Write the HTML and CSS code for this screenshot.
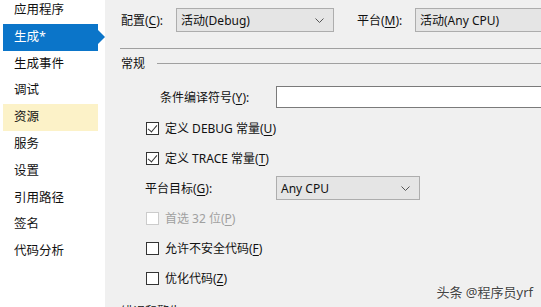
FILE: index.html
```html
<!DOCTYPE html>
<html lang="zh-CN">
<head>
    <meta charset="UTF-8">
    <title>项目属性</title>
    <link rel="stylesheet" href="styles.css">
</head>
<body>
    <div class="window">
        <nav class="nav">
            <div class="nav-item">应用程序</div>
            <div class="nav-item active">生成*</div>
            <div class="nav-item">生成事件</div>
            <div class="nav-item">调试</div>
            <div class="nav-item hover">资源</div>
            <div class="nav-item">服务</div>
            <div class="nav-item">设置</div>
            <div class="nav-item">引用路径</div>
            <div class="nav-item">签名</div>
            <div class="nav-item">代码分析</div>
        </nav>
        <main class="panel">
            <div class="top-row">
                <span class="top-label">配置(<u>C</u>):</span>
                <div class="combo combo-config">
                    <span>活动(Debug)</span>
                    <svg class="chevron" width="9" height="5" viewBox="0 0 9 5"><path d="M0.5 0.5 L4.5 4.5 L8.5 0.5" fill="none" stroke="#555" stroke-width="1"/></svg>
                </div>
                <span class="top-label platform-label">平台(<u>M</u>):</span>
                <div class="combo combo-platform">
                    <span>活动(Any CPU)</span>
                </div>
            </div>
            <div class="separator"></div>

            <div class="group-title">
                <span>常规</span>
                <div class="group-line"></div>
            </div>

            <div class="field-row">
                <span class="field-label">条件编译符号(<u>Y</u>):</span>
                <div class="textbox"></div>
            </div>

            <div class="row">
                <span class="check checked"></span>
                <span>定义 DEBUG 常量(<u>U</u>)</span>
            </div>
            <div class="row">
                <span class="check checked"></span>
                <span>定义 TRACE 常量(<u>T</u>)</span>
            </div>
            <div class="row">
                <span class="target-label">平台目标(<u>G</u>):</span>
                <div class="combo combo-target">
                    <span>Any CPU</span>
                    <svg class="chevron" width="9" height="5" viewBox="0 0 9 5"><path d="M0.5 0.5 L4.5 4.5 L8.5 0.5" fill="none" stroke="#555" stroke-width="1"/></svg>
                </div>
            </div>
            <div class="row disabled">
                <span class="check"></span>
                <span>首选 32 位(<u>P</u>)</span>
            </div>
            <div class="row">
                <span class="check"></span>
                <span>允许不安全代码(<u>F</u>)</span>
            </div>
            <div class="row">
                <span class="check"></span>
                <span>优化代码(<u>Z</u>)</span>
            </div>

            <div class="group-title last">
                <span>错误和警告</span>
            </div>
        </main>
        <div class="watermark">头条 @程序员yrf</div>
    </div>
</body>
</html>
```

FILE: styles.css
```css
body {
    margin: 0;
    font-family: "Noto Sans", "Noto Sans CJK SC", sans-serif;
    font-size: 12px;
    color: #111;
    background: #f0f0f0;
    overflow: hidden;
}
.window {
    display: flex;
    width: 541px;
    height: 307px;
    overflow: hidden;
    position: relative;
}
u {
    text-decoration: underline;
    text-underline-offset: 2px;
}

/* left navigation */
.nav {
    width: 105px;
    flex-shrink: 0;
    background: #fff;
    margin-top: -3px;
}
.nav-item {
    position: relative;
    height: 26.8px;
    line-height: 26.8px;
    width: 95px;
    margin-left: 3px;
    padding-left: 11px;
    box-sizing: border-box;
    font-size: 12.5px;
}
.nav-item.active {
    background: #0b75c9;
    color: #fff;
}
.nav-item.active::after {
    content: "";
    position: absolute;
    right: -7px;
    top: 6px;
    border-left: 7px solid #0b75c9;
    border-top: 7px solid transparent;
    border-bottom: 7px solid transparent;
}
.nav-item.hover {
    background: #fcf2c8;
}

/* right panel */
.panel {
    flex: 1;
    padding: 8px 0 0 16px;
    min-width: 0;
}
.top-row {
    display: flex;
    align-items: center;
    height: 24px;
    white-space: nowrap;
}
.top-label {
    width: 55px;
    flex-shrink: 0;
}
.platform-label {
    margin-left: 23px;
    width: 58px;
}
.combo {
    display: flex;
    align-items: center;
    justify-content: space-between;
    height: 24px;
    box-sizing: border-box;
    border: 1px solid #adadad;
    background: #e5e5e5;
    padding: 0 9px 0 4px;
    flex-shrink: 0;
}
.combo-config {
    width: 158px;
}
.combo-platform {
    width: 160px;
}
.combo-target {
    width: 144px;
}
.chevron {
    display: block;
}
.separator {
    margin: 16px 0 0 -1px;
    border-top: 1px solid #a0a0a0;
}
.group-title {
    display: flex;
    align-items: center;
    height: 16px;
    margin-top: 6px;
}
.group-line {
    flex: 1;
    margin-left: 12px;
    border-top: 1px solid #a0a0a0;
}
.group-title.last {
    margin-top: 10px;
}
.field-row {
    display: flex;
    align-items: center;
    height: 22px;
    margin-top: 15px;
    white-space: nowrap;
}
.field-label {
    margin-left: 39px;
    width: 116px;
    flex-shrink: 0;
}
.textbox {
    width: 300px;
    height: 22px;
    box-sizing: border-box;
    border: 1px solid #7a7a7a;
    background: #fff;
    flex-shrink: 0;
}
.row {
    display: flex;
    align-items: center;
    height: 30px;
    padding-left: 25px;
    white-space: nowrap;
}
.field-row + .row {
    margin-top: 5px;
}
.check {
    width: 13px;
    height: 13px;
    box-sizing: border-box;
    border: 1px solid #333;
    background: #fff;
    margin-right: 6px;
    position: relative;
    flex-shrink: 0;
}
.check.checked::after {
    content: "";
    position: absolute;
    left: 3px;
    top: 0;
    width: 4px;
    height: 8px;
    border-right: 1px solid #333;
    border-bottom: 1px solid #333;
    transform: rotate(40deg);
}
.target-label {
    margin-left: -1px;
    width: 131px;
    flex-shrink: 0;
}
.disabled {
    color: #a0a0a0;
}
.disabled .check {
    border-color: #cccccc;
}
.watermark {
    position: absolute;
    right: 8px;
    bottom: 6px;
    font-size: 13px;
    color: #444;
    text-shadow: 0 0 2px #fff;
}
```
